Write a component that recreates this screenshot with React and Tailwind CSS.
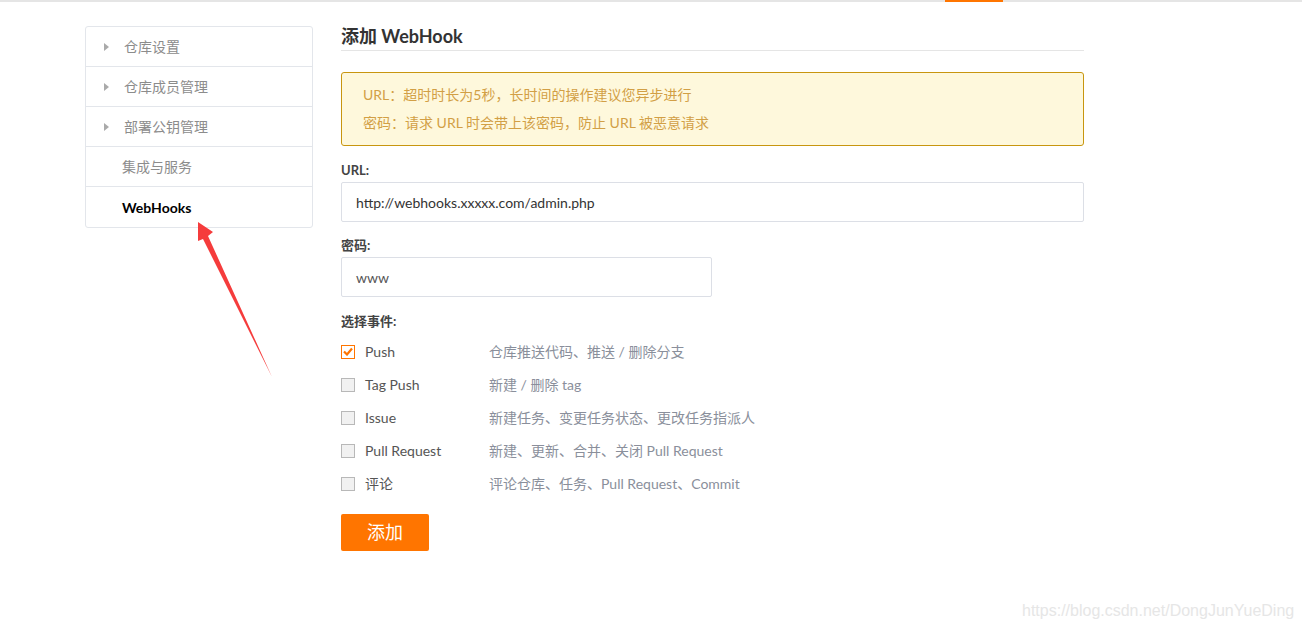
import React from 'react';

const menu = [
  { label: '仓库设置', caret: true },
  { label: '仓库成员管理', caret: true },
  { label: '部署公钥管理', caret: true },
  { label: '集成与服务' },
  { label: 'WebHooks', active: true },
];

const events = [
  { name: 'Push', desc: '仓库推送代码、推送 / 删除分支', checked: true },
  { name: 'Tag Push', desc: '新建 / 删除 tag' },
  { name: 'Issue', desc: '新建任务、变更任务状态、更改任务指派人' },
  { name: 'Pull Request', desc: '新建、更新、合并、关闭 Pull Request' },
  { name: '评论', desc: '评论仓库、任务、Pull Request、Commit' },
];

const Checkbox = ({ checked }) =>
  checked ? (
    <span className="w-[14px] h-[14px] border border-[#ff7500] bg-white flex items-center justify-center">
      <svg width="10" height="9" viewBox="0 0 10 9">
        <path d="M1 4.5 L4 7.5 L9 1.5" fill="none" stroke="#ff7500" strokeWidth="2.2" />
      </svg>
    </span>
  ) : (
    <span className="w-[14px] h-[14px] border border-[#b8b8b8] bg-[#f1f1f1]" />
  );

export default function App() {
  return (
    <div className="relative min-h-[627px] bg-white font-['Lato','Noto_Sans_CJK_SC',sans-serif]">
      <div className="h-[2px] bg-[#e5e5e5] flex">
        <div className="ml-[945px] w-[58px] bg-[#ff7500]" />
      </div>

      <div className="flex items-start pl-[85px] pt-[22px]">
        {/* sidebar */}
        <div className="mt-[2px] w-[228px] border border-[#e3e6eb] rounded-[3px] bg-white">
          {menu.map((m, i) => (
            <div
              key={m.label}
              className={`h-[40px] flex items-center text-[14px] ${i < menu.length - 1 ? 'border-b border-[#e3e6eb]' : ''} ${m.caret ? 'pl-[18px]' : 'pl-[36px]'}`}
            >
              {m.caret && (
                <span className="w-0 h-0 border-y-[4px] border-y-transparent border-l-[5px] border-l-[#aaa] mr-[15px]" />
              )}
              <span className={m.active ? 'font-bold text-black' : 'text-[#8c8c8c]'}>{m.label}</span>
            </div>
          ))}
        </div>

        {/* main */}
        <div className="ml-[28px] w-[743px]">
          <h2 className="text-[18px] leading-[24px] font-bold text-[#333] pb-[2px] border-b border-[#e5e5e5]">
            添加 WebHook
          </h2>

          <div className="mt-[21px] border border-[#c8960f] rounded-[3px] bg-[#fef8dc] py-[8px] pl-[21px] text-[14px] leading-[28px] text-[#d29f45]">
            <p>URL：超时时长为5秒，长时间的操作建议您异步进行</p>
            <p>密码：请求 URL 时会带上该密码，防止 URL 被恶意请求</p>
          </div>

          <div className="mt-[14px] text-[13px] leading-[20px] font-bold text-[#444]">URL:</div>
          <div className="mt-[2px] h-[40px] border border-[#dcdfe6] rounded-[2px] px-[14px] flex items-center text-[14px] text-[#333]">
            http://webhooks.xxxxx.com/admin.php
          </div>

          <div className="mt-[13px] text-[13px] leading-[20px] font-bold text-[#444]">密码:</div>
          <div className="mt-[2px] w-[371px] h-[40px] border border-[#dcdfe6] rounded-[2px] px-[14px] flex items-center text-[14px] text-[#555]">
            www
          </div>

          <div className="mt-[14px] text-[13px] leading-[20px] font-bold text-[#444]">选择事件:</div>
          <div className="mt-[4px]">
            {events.map((e) => (
              <div key={e.name} className="h-[33px] flex items-center text-[14px]">
                <Checkbox checked={e.checked} />
                <span className="ml-[10px] w-[124px] text-[#555]">{e.name}</span>
                <span className="text-[#8a8f9b]">{e.desc}</span>
              </div>
            ))}
          </div>

          <button className="mt-[14px] w-[88px] h-[37px] bg-[#ff7500] rounded-[2px] text-white text-[18px]">
            添加
          </button>
        </div>
      </div>

      {/* annotation arrow */}
      <svg className="absolute left-0 top-0 pointer-events-none" width="300" height="400">
        <polygon points="198,222 213,232 208,236 272,377 203,239 198,241" fill="#f53c3c" />
      </svg>

      <div className="absolute left-[1022px] top-[599px] text-[16px] text-[#e6e6e6] font-['Liberation_Sans',sans-serif]">
        https://blog.csdn.net/DongJunYueDing
      </div>
    </div>
  );
}
